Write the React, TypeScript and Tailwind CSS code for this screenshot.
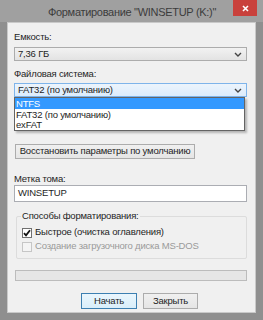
import React from "react";

const font = { fontFamily: '"Liberation Sans", Arial, sans-serif' };

function Chevron() {
  return (
    <svg width="8" height="5" viewBox="0 0 8 5" className="block">
      <polyline points="1,1 4,4 7,1" fill="none" stroke="#444" strokeWidth="1.4" />
    </svg>
  );
}

export default function App() {
  return (
    <div className="w-[263px] h-[320px] bg-[#8f8f8f] flex flex-col text-[9.5px] tracking-[-0.2px] text-[#1e1e1e] whitespace-nowrap" style={font}>
      {/* Title bar */}
      <div className="h-[22px] relative flex items-center justify-center bg-[#a0a0a0]">
        <span className="text-[11px] tracking-[-0.3px] text-[#3c3c3c] leading-none mt-[3px] ml-[1px]">Форматирование "WINSETUP (K:)"</span>
        <div className="absolute right-[6px] top-0 w-[24px] h-[16px] bg-[#c9413c] flex items-center justify-center">
          <svg width="7" height="7" viewBox="0 0 7 7">
            <path d="M1 1L6 6M6 1L1 6" stroke="#fff" strokeWidth="1.6" />
          </svg>
        </div>
      </div>
      {/* Panel */}
      <div className="mx-[7px] h-[291px] bg-[#f0f0f0] border border-[#c9c9c9] flex flex-col pl-[6px] pr-[8px]">
        <div className="mt-[7px] h-[14px] leading-[14px]">Емкость:</div>
        <div className="mt-[3px] h-[14px] border border-[#acacac] bg-gradient-to-b from-[#f2f2f2] to-[#e3e3e3] flex items-center justify-between pl-[3px] pr-[4px]">
          <span>7,36 ГБ</span>
          <Chevron />
        </div>
        <div className="mt-[6px] h-[14px] leading-[14px]">Файловая система:</div>
        <div className="relative mt-[2px]">
          <div className="h-[14px] border border-[#7eb4ea] bg-gradient-to-b from-[#ecf4fc] to-[#dcecfc] flex items-center justify-between pl-[3px] pr-[4px]">
            <span>FAT32 (по умолчанию)</span>
            <Chevron />
          </div>
          <div className="absolute left-0 right-[2px] top-[14px] bg-white border border-[#646464] shadow-[2px_2px_2px_rgba(0,0,0,0.25)] flex flex-col">
            <div className="h-[11px] leading-[11px] bg-[#3399ff] text-white pl-[1px]">NTFS</div>
            <div className="h-[11px] leading-[11px] pl-[1px]">FAT32 (по умолчанию)</div>
            <div className="h-[10px] leading-[10px] pl-[1px]">exFAT</div>
          </div>
        </div>
        <div className="h-[47px]" />
        <div className="ml-[1px] w-[180px] h-[15px] border border-[#acacac] bg-gradient-to-b from-[#f0f0f0] to-[#e5e5e5] flex items-center justify-center">
          Восстановить параметры по умолчанию
        </div>
        <div className="mt-[13px] h-[14px] leading-[14px]">Метка тома:</div>
        <div className="mt-[-1px] h-[17px] border border-[#abadb3] bg-white flex items-center pl-[3px]">WINSETUP</div>
        <div className="relative mt-[14px] ml-[2px] h-[43px] border border-[#dcdcdc] rounded-[2px] flex flex-col pl-[5px] pt-[10px]">
          <div className="absolute left-[4px] top-[-8px] px-[1px] bg-[#f0f0f0] h-[14px] leading-[14px]">Способы форматирования:</div>
          <div className="flex items-center h-[11px]">
            <div className="w-[10px] h-[10px] border border-[#707070] bg-white flex items-center justify-center">
              <svg width="8" height="8" viewBox="0 0 8 8">
                <path d="M1 4.2L3 6.3L7 1.3" fill="none" stroke="#111" strokeWidth="1.8" />
              </svg>
            </div>
            <span className="ml-[3px]">Быстрое (очистка оглавления)</span>
          </div>
          <div className="flex items-center h-[11px] mt-[3px]">
            <div className="w-[10px] h-[10px] border border-[#c6c6c6] bg-[#f4f4f4]" />
            <span className="ml-[3px] text-[#9a9a9a]">Создание загрузочного диска MS-DOS</span>
          </div>
        </div>
        <div className="mt-[11px] ml-[1px] h-[11px] border border-[#bcbcbc] bg-[#e6e6e6]" />
        <div className="mt-[12px] flex gap-[6px] pl-[67px]">
          <div className="w-[56px] h-[16px] border border-[#3c7fb1] bg-gradient-to-b from-[#eaf6fd] to-[#d9eefa] flex items-center justify-center">Начать</div>
          <div className="w-[55px] h-[16px] border border-[#acacac] bg-gradient-to-b from-[#f0f0f0] to-[#e5e5e5] flex items-center justify-center">Закрыть</div>
        </div>
      </div>
    </div>
  );
}
